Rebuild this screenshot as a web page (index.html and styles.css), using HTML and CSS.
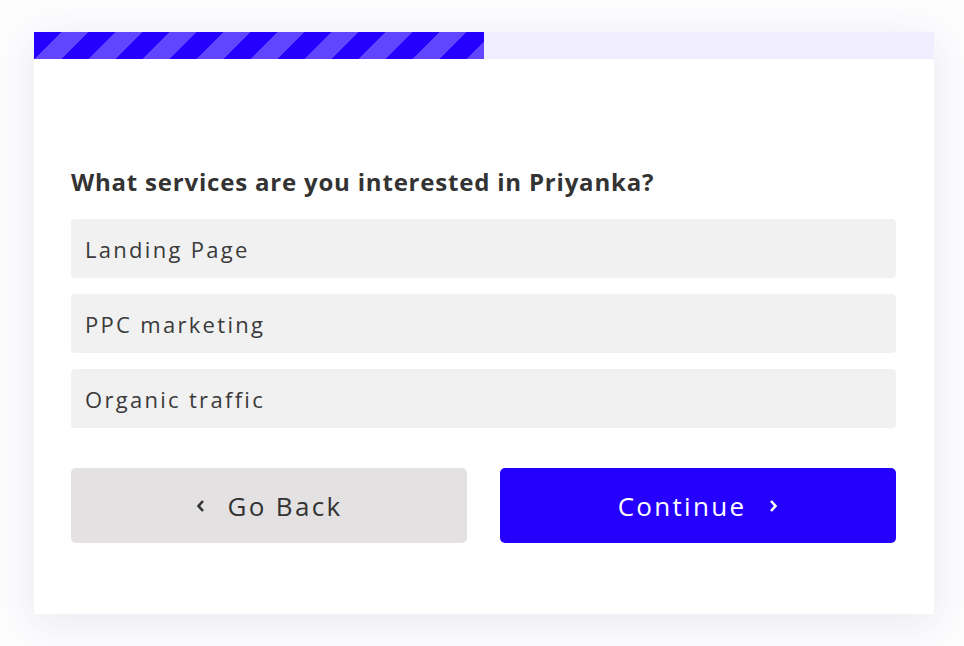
FILE: index.html
```html
<!DOCTYPE html>
<html lang="en">
<head>
<meta charset="utf-8">
<title>Services</title>
<link rel="stylesheet" href="styles.css">
</head>
<body>
<div class="card">
  <div class="progress"><div class="progress-fill" style="width:50%"></div></div>
  <div class="content">
    <h2 class="question">What services are you interested in Priyanka?</h2>
    <div class="options">
      <div class="option">Landing Page</div>
      <div class="option">PPC marketing</div>
      <div class="option">Organic traffic</div>
    </div>
    <div class="actions">
      <button class="btn btn-back"><svg class="chev" width="10" height="14" viewBox="0 0 10 14"><path d="M7 2 L2.5 7 L7 12" fill="none" stroke="currentColor" stroke-width="2.6"/></svg><span>Go Back</span></button>
      <button class="btn btn-next"><span>Continue</span><svg class="chev" width="10" height="14" viewBox="0 0 10 14"><path d="M3 2 L7.5 7 L3 12" fill="none" stroke="currentColor" stroke-width="2.6"/></svg></button>
    </div>
  </div>
</div>
</body>
</html>
```
FILE: styles.css
```css
html, body {
  margin: 0;
  padding: 0;
  background: #fdfdfe;
}
body {
  padding: 32px 30px 32px 34px;
  font-family: "Open Sans", "Liberation Sans", sans-serif;
}
.card {
  width: 900px;
  background: #ffffff;
  box-shadow: 0 8px 40px rgba(60, 60, 140, 0.11);
}
.progress {
  height: 27px;
  background: #f0edfe;
}
.progress-fill {
  height: 100%;
  background-color: #2600ff;
  background-image: linear-gradient(-45deg,
    rgba(255,255,255,.27) 25%, transparent 25%,
    transparent 50%, rgba(255,255,255,.27) 50%,
    rgba(255,255,255,.27) 75%, transparent 75%, transparent);
  background-size: 54px 54px;
}
.content {
  padding: 108px 38px 71px 37px;
}
.question {
  margin: 0 0 22px;
  font-size: 24px;
  font-weight: 700;
  color: #333333;
  line-height: 30px;
  letter-spacing: 0.8px;
}
.options {
  display: flex;
  flex-direction: column;
  gap: 16px;
}
.option {
  height: 59px;
  display: flex;
  align-items: center;
  padding-left: 14px;
  background: #f1f1f1;
  border-radius: 4px;
  font-size: 22px;
  letter-spacing: 2.3px;
  color: #3a3a3a;
}
.actions {
  display: flex;
  gap: 33px;
  margin-top: 40px;
}
.btn {
  flex: 1;
  height: 75px;
  border: 0;
  border-radius: 5px;
  display: flex;
  align-items: center;
  justify-content: center;
  gap: 22px;
  font-family: inherit;
  font-size: 26px;
  letter-spacing: 2.3px;
}
.btn-back {
  background: #e3e1e2;
  color: #333333;
}
.btn-next {
  background: #2600ff;
  color: #ffffff;
}
.chev {
  display: block;
}
```
